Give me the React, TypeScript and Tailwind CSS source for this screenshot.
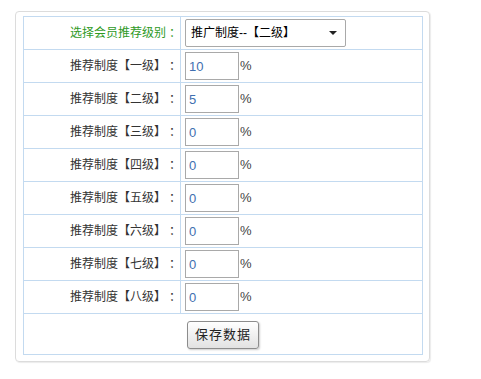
import { useState } from 'react';

const levels = [
  { label: '推荐制度【一级】', value: '10' },
  { label: '推荐制度【二级】', value: '5' },
  { label: '推荐制度【三级】', value: '0' },
  { label: '推荐制度【四级】', value: '0' },
  { label: '推荐制度【五级】', value: '0' },
  { label: '推荐制度【六级】', value: '0' },
  { label: '推荐制度【七级】', value: '0' },
  { label: '推荐制度【八级】', value: '0' },
];

const font = { fontFamily: '"Liberation Sans", "Noto Sans CJK SC", sans-serif' };
// TC centres the full-width colon like the original
const colonFont = { fontFamily: '"Noto Sans CJK TC", sans-serif' };

export default function App() {
  const [values, setValues] = useState(levels.map((l) => l.value));
  const [plan, setPlan] = useState('2');

  return (
    <div className="min-h-screen bg-white pl-[15px] pt-[11px] text-[12px] text-[#333]" style={font}>
      <div className="w-[415px] rounded-[4px] border border-[#dcdcdc] pt-[4px] pl-[7px] pr-[6px] pb-[6px] shadow-[1px_1px_1px_rgba(0,0,0,0.08)]">
        <div className="w-[400px] border border-[#c3daf0]">
          <div className="flex h-[33px] border-b border-[#c3daf0]">
            <div className="flex w-[157px] items-center justify-end border-r border-[#c3daf0] pr-[2px] text-[#2f9a1f]">
              选择会员推荐级别<span style={colonFont}>：</span>
            </div>
            <div className="flex items-center pl-[4px]">
              <div className="relative">
                <select
                  value={plan}
                  onChange={(e) => setPlan(e.target.value)}
                  className="h-[28px] w-[161px] appearance-none rounded-[2px] border border-[#a9a9a9] bg-white pl-[5px] text-[12px] text-black outline-none"
                  style={font}
                >
                  <option value="1">推广制度--【一级】</option>
                  <option value="2">推广制度--【二级】</option>
                  <option value="3">推广制度--【三级】</option>
                </select>
                <span className="pointer-events-none absolute right-[9px] top-[12px] h-0 w-0 border-x-[4px] border-t-[4px] border-x-transparent border-t-[#222]" />
              </div>
            </div>
          </div>

          {levels.map((l, i) => (
            <div key={l.label} className="flex h-[33px] border-b border-[#c3daf0]">
              <div className="flex w-[157px] items-center justify-end border-r border-[#c3daf0] pr-[2px]">
                {l.label}
                <span style={colonFont}>：</span>
              </div>
              <div className="flex items-center pl-[4px]">
                <input
                  value={values[i]}
                  onChange={(e) => setValues(values.map((v, j) => (j === i ? e.target.value : v)))}
                  className="h-[28px] w-[54px] border border-[#a9a9a9] bg-white pl-[3px] text-[13px] text-[#3f6fb0] outline-none"
                  style={font}
                />
                <span className="ml-[1px] text-[13px] text-[#444]">%</span>
              </div>
            </div>
          ))}

          <div className="flex h-[40px] justify-center pt-[7px]">
            <button
              className="h-[28px] w-[72px] rounded-[3px] border border-[#8c8c8c] bg-gradient-to-b from-white to-[#e2e2e2] text-[13px] tracking-[1px] text-[#222] shadow-[1px_1px_2px_rgba(0,0,0,0.2)]"
              style={font}
            >
              保存数据
            </button>
          </div>
        </div>
      </div>
    </div>
  );
}
